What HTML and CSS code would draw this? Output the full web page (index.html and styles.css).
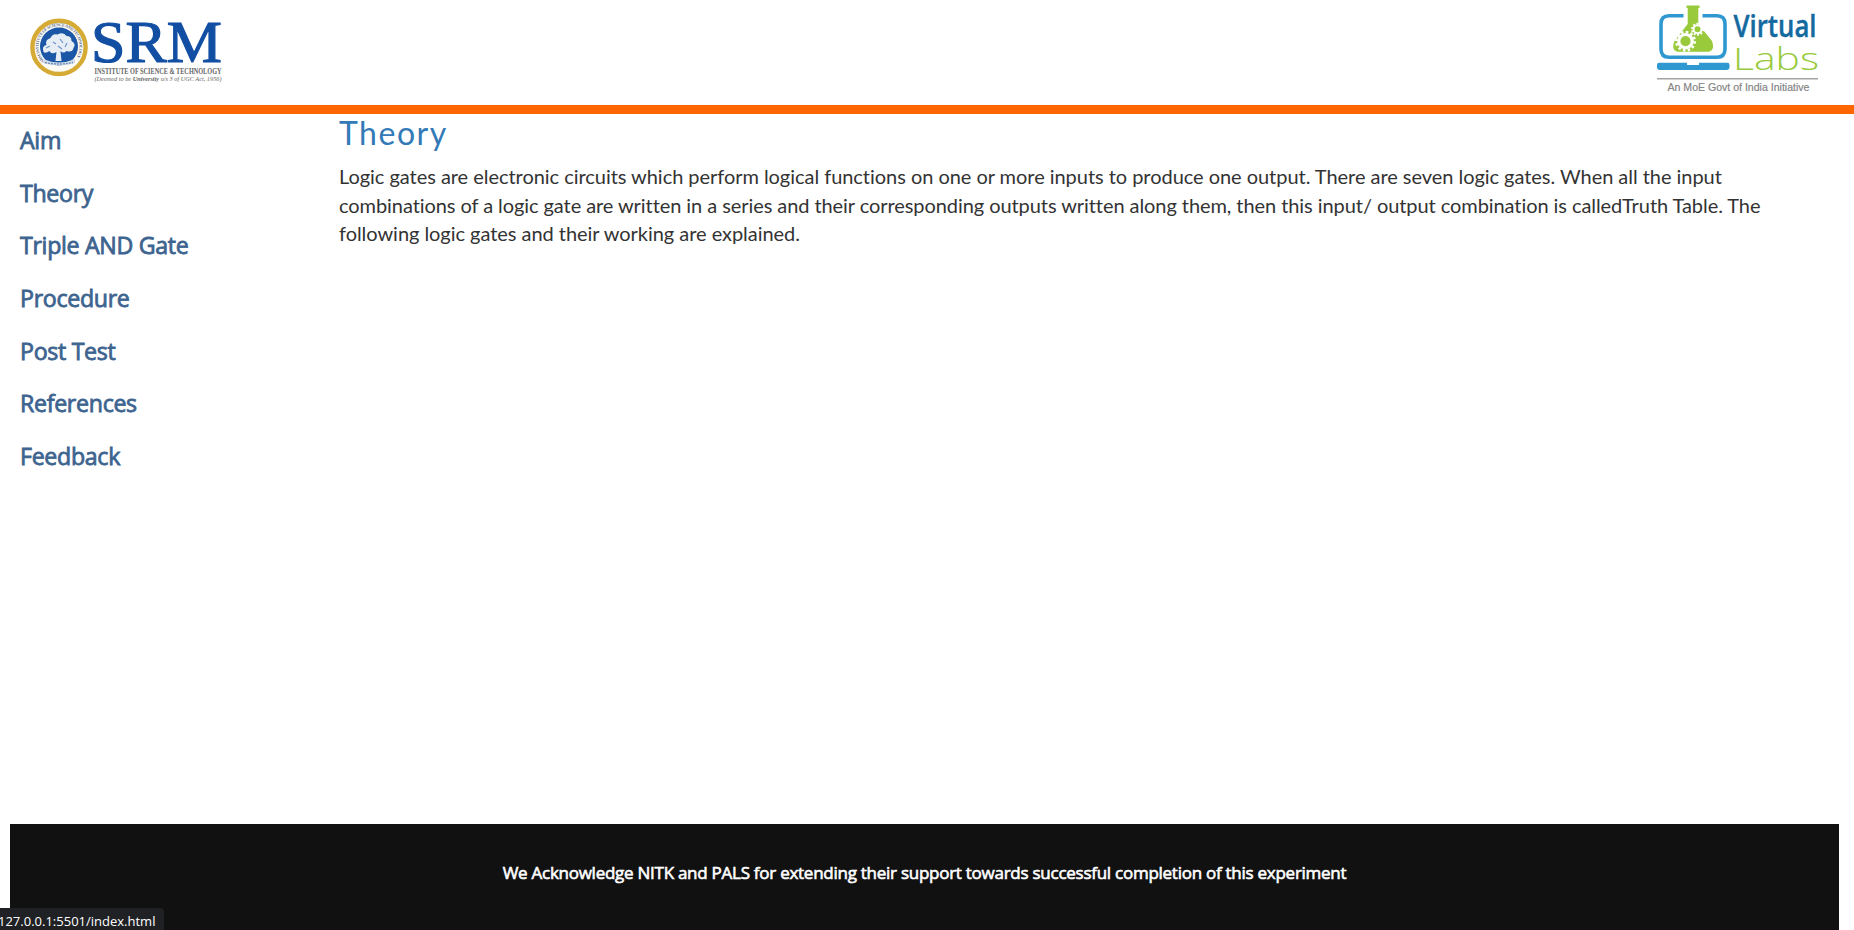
FILE: index.html
```html
<!DOCTYPE html>
<html lang="en">
<head>
<meta charset="utf-8">
<title>Triple AND Gate</title>
<link rel="stylesheet" href="styles.css">
</head>
<body>
<header class="header">
  <svg class="srm-logo" viewBox="20 10 210 80" width="210" height="80" role="img" aria-label="SRM">
    <defs><path id="seal-ring" d="M 44.5 61 A 20.5 20.5 0 1 1 73.500 61"/></defs>
    <circle cx="59" cy="47.400" r="26.600" fill="#fbfaf4" stroke="#d5aa35" stroke-width="4.400"/>
    <circle cx="59" cy="46.500" r="19" fill="#1b56a7"/>
    <text class="seal-text"><textPath href="#seal-ring" textLength="91">SRM INSTITUTE OF SCIENCE AND TECHNOLOGY</textPath></text>
    <path d="M43.500 52 q-2-6 3-7 q-2-5 4-7 q2-5 7-3.500 q6-3 9 1.500 q5 0 5 5 q5 3 2 7 q-1 5-7 3 q-3 3-6 0 l1 10 h-6 l1-9 q-5 3-7-1 q-4 3-6 1z" fill="#e6edf5"/>
    <path d="M46 48 l4-2 M53 42 l3 2 M60 39 l3 4 M67 43 l-2 4 M58 46 l4 3" stroke="#6f96c8" stroke-width="1.200" fill="none"/>
    <path d="M43 59 q16 7 32 0 v4 q-16 5-32 0z" fill="#d5deea"/>
    <path d="M45 62.500 q14 3 28 0" stroke="#6f8fb9" stroke-width="1.400" stroke-dasharray="2 1" fill="none"/>
    <text class="srm-name" x="91" y="62.300" textLength="131" lengthAdjust="spacingAndGlyphs">SRM</text>
    <text class="srm-sub" x="94.500" y="73.600" textLength="127" lengthAdjust="spacingAndGlyphs">INSTITUTE OF SCIENCE &amp; TECHNOLOGY</text>
    <text class="srm-note" x="94.500" y="81.300" textLength="127" lengthAdjust="spacingAndGlyphs">(Deemed to be <tspan font-weight="700">University</tspan> u/s 3 of UGC Act, 1956)</text>
  </svg>
  <svg class="vl-logo" viewBox="1645 0 180 100" width="180" height="100" role="img" aria-label="Virtual Labs">
    <path d="M1683.500 15.800 H1669 Q1661 15.800 1661 24 V49 Q1661 57.200 1669 57.200 H1717 Q1725 57.200 1725 49 V24 Q1725 15.800 1717 15.800 H1702.500" fill="none" stroke="#3098d0" stroke-width="3.600"/>
    <path d="M1659 62.700 H1687 V65 H1699 V62.700 H1727.500 Q1729.500 62.700 1729.500 65 V67 Q1729.500 70 1726.500 70 H1660 Q1657 70 1657 67 V65 Q1657 62.700 1659 62.700z" fill="#3098d0"/>
    <path d="M1686.500 5.500 H1699.500 V8 H1698.300 V24 L1712 41 Q1715.500 51.800 1707 51.800 H1679.500 Q1670.500 51.800 1674.500 41 L1687.700 24 V8 H1686.500z" fill="#98ca3c"/>
    <circle cx="1685.500" cy="41.200" r="6.700" fill="none" stroke="#fff" stroke-width="3.200"/>
    <circle cx="1685.500" cy="41.200" r="9.200" fill="none" stroke="#fff" stroke-width="2.600" stroke-dasharray="2.500 2.317"/>
    <circle cx="1697.500" cy="29.300" r="4" fill="none" stroke="#fff" stroke-width="2"/>
    <circle cx="1697.500" cy="29.300" r="5.600" fill="none" stroke="#fff" stroke-width="1.800" stroke-dasharray="1.900 1.618"/>
    <text class="vl-virtual" x="1733.500" y="37.300" textLength="83" lengthAdjust="spacingAndGlyphs">Virtual</text>
    <text class="vl-labs" x="1733" y="69.600" textLength="86" lengthAdjust="spacingAndGlyphs">Labs</text>
    <path d="M1657 78.700 H1818" stroke="#a3a3a3" stroke-width="1.600"/>
    <text class="vl-note" x="1667.500" y="91.300" textLength="142" lengthAdjust="spacingAndGlyphs">An MoE Govt of India Initiative</text>
  </svg>
</header>
<div class="page">
  <nav class="nav">
    <a>Aim</a><a>Theory</a><a>Triple AND Gate</a><a>Procedure</a><a>Post Test</a><a>References</a><a>Feedback</a>
  </nav>
  <main class="main">
    <h2 class="title">Theory</h2>
    <p class="copy"><span class="line">Logic gates are electronic circuits which perform logical functions on one or more inputs to produce one output. There are seven logic gates. When all the input</span>
    <span class="line line-tight">combinations of a logic gate are written in a series and their corresponding outputs written along them, then this input/ output combination is calledTruth Table. The</span>
    <span class="line">following logic gates and their working are explained.</span></p>
  </main>
</div>
<footer class="footer">We Acknowledge NITK and PALS for extending their support towards successful completion of this experiment</footer>
<div class="status">127.0.0.1:5501/index.html</div>
</body>
</html>
```
FILE: styles.css
```css
* { box-sizing: border-box; }
body {
  margin: 0;
  height: 930px;
  display: flex;
  flex-direction: column;
  overflow: hidden;
  background: #fff;
  font-family: "Open Sans", sans-serif;
}
.header {
  display: flex;
  justify-content: space-between;
  align-items: flex-start;
  height: 114px;
  flex: none;
  padding: 0 29px 0 20px;
  border-bottom: 9px solid #ff6600;
}
.srm-logo, .vl-logo { overflow: visible; }
.srm-logo { margin-top: 10px; }
.seal-text { font: 700 4.2px "Liberation Serif", serif; fill: #5b6d92; }
.srm-name { font: 400 60px "Liberation Serif", serif; fill: #124fa3; stroke: #124fa3; stroke-width: 1.2px; }
.srm-sub { font: 700 7.800px "Liberation Serif", serif; fill: #666; }
.srm-note { font: italic 7px "Liberation Serif", serif; fill: #666; }
.vl-virtual { font: 600 30px "Open Sans", sans-serif; fill: #146a9f; stroke: #146a9f; stroke-width: 0.4px; }
.vl-labs { font: 300 32px "Open Sans", sans-serif; fill: #98ca3c; }
.vl-note { font: 11.500px "Liberation Sans", sans-serif; fill: #858585; stroke: #858585; stroke-width: 0.2px; }
.page { display: flex; flex: 1; min-height: 0; }
.nav {
  display: flex;
  flex-direction: column;
  width: 339px;
  flex: none;
  padding: 10px 20px 0;
}
.nav a {
  height: 52.700px;
  line-height: 33px;
  font-size: 23.200px;
  letter-spacing: -0.32px;
  color: #3d648f;
  -webkit-text-stroke: 0.8px #3d648f;
}
.main { flex: 1; }
.title {
  margin: 0;
  font: 400 32px/38px Lato, sans-serif;
  letter-spacing: 1.5px;
  color: #337ab7;
}
.copy {
  margin: 10px 0 0;
  font: 400 20px/28.570px Lato, sans-serif;
  letter-spacing: -0.04px;
  color: #333;
}
.line { display: block; white-space: nowrap; }
.line-tight { letter-spacing: -0.07px; }
.footer {
  flex: none;
  height: 106px;
  margin: 0 15px 0 10px;
  background: #111;
  color: #fff;
  text-align: center;
  font-size: 17px;
  letter-spacing: -0.26px;
  line-height: 98px;
  -webkit-text-stroke: 0.6px #fff;
}
.status {
  position: absolute;
  left: 0;
  bottom: 0;
  width: 164px;
  height: 22px;
  background: #202124;
  border-top-right-radius: 4px;
  color: #fff;
  font: 13px/26px "Open Sans", sans-serif;
  text-indent: -2px;
  white-space: nowrap;
}
```
